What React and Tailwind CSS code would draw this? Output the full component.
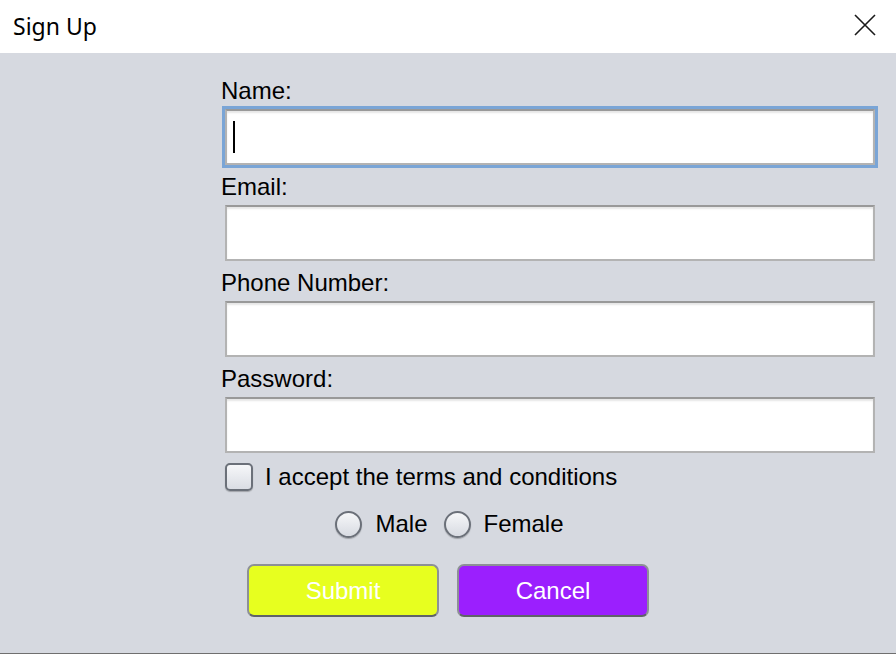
const arial = { fontFamily: '"Liberation Sans", Arial, sans-serif' }

function Field({ label, focused }) {
  return (
    <div>
      <div className="flex h-[40px] items-end pb-[5px] text-[24px] leading-[26px] text-black">{label}</div>
      <div
        className={
          'ml-[4px] flex h-[56px] w-[650px] items-center border-2 border-[#b3b3b3] border-t-[#999999] bg-white pl-[6px] shadow-[inset_0_2px_2px_rgba(0,0,0,0.10)] ' +
          (focused ? 'ring-[3px] ring-[#7aa5d6]' : '')
        }
      >
        {focused && <span className="h-[32px] w-[2px] bg-black" />}
      </div>
    </div>
  )
}

export default function App() {
  return (
    <div className="flex h-[654px] w-[896px] flex-col bg-[#d6d9e0]" style={arial}>
      <div className="flex h-[53px] items-center justify-between bg-white pl-[13px] pr-[20px]">
        <span className="text-[23px] text-black" style={{ fontFamily: '"Noto Sans", "Open Sans", sans-serif' }}>
          Sign Up
        </span>
        <svg width="22" height="22" viewBox="0 0 22 22" className="mb-[3px]">
          <path d="M1 1 L21 21 M21 1 L1 21" stroke="#1a1a1a" strokeWidth="1.6" fill="none" />
        </svg>
      </div>

      <div className="flex flex-1 flex-col border-b border-[#6f6f6f]">
        <div className="flex flex-col pl-[221px] pt-[16px]">
          <Field label="Name:" focused />
          <Field label="Email:" />
          <Field label="Phone Number:" />
          <Field label="Password:" />

          <div className="ml-[4px] mt-[10px] flex items-center gap-[12px]">
            <span className="h-[28px] w-[28px] rounded-[5px] border-2 border-[#6b7079] bg-gradient-to-b from-[#f6f7f9] to-[#dadde4] shadow-[0_1px_1px_rgba(0,0,0,0.25)]" />
            <span className="text-[24px] leading-[28px] text-black">I accept the terms and conditions</span>
          </div>
        </div>

        <div className="mt-[19px] flex items-center justify-center pl-[3px]">
          <span className="h-[27px] w-[27px] rounded-full border-2 border-[#6b7079] bg-gradient-to-b from-[#f6f7f9] to-[#d8dbe2] shadow-[0_1px_1px_rgba(0,0,0,0.25)]" />
          <span className="ml-[13px] text-[24px] leading-[28px] text-black">Male</span>
          <span className="ml-[16px] h-[27px] w-[27px] rounded-full border-2 border-[#6b7079] bg-gradient-to-b from-[#f6f7f9] to-[#d8dbe2] shadow-[0_1px_1px_rgba(0,0,0,0.25)]" />
          <span className="ml-[13px] text-[24px] leading-[28px] text-black">Female</span>
        </div>

        <div className="mt-[26px] flex justify-center gap-[18px]">
          <button className="flex h-[53px] w-[192px] items-center justify-center rounded-[7px] border-2 border-[#8d9096] border-b-[#5f6268] bg-[#e7ff1f] text-[24px] text-white">
            Submit
          </button>
          <button className="flex h-[53px] w-[192px] items-center justify-center rounded-[7px] border-2 border-[#8d9096] border-b-[#5f6268] bg-[#9b1ffe] text-[24px] text-white">
            Cancel
          </button>
        </div>
      </div>
    </div>
  )
}
